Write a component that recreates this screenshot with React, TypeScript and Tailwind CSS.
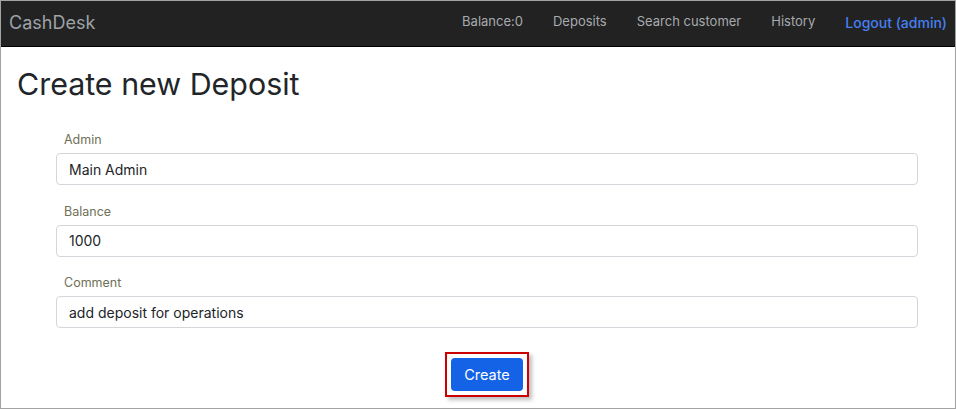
import React from "react";

const links = ["Balance:0", "Deposits", "Search customer", "History"];

function Field({ label, value }: { label: string; value: string }) {
  return (
    <div className="mb-[17.5px]">
      <label className="block pl-[8px] text-[12.5px] leading-[18px] text-[#6f6f58]">{label}</label>
      <div className="mt-[4px] flex h-[32px] items-center rounded-[4px] border border-[#d3d6da] px-[12px] text-[14px] text-[#212529]">
        {value}
      </div>
    </div>
  );
}

export default function App() {
  return (
    <div
      className="h-[409px] w-[956px] overflow-hidden bg-white"
      style={{ fontFamily: "Inter, 'Noto Sans', sans-serif" }}
    >
      <div className="flex h-full flex-col border border-[#a3a3a3]">
        <nav className="flex h-[46px] shrink-0 items-center justify-between border-b border-black bg-[#222222] pb-[3px] pl-[8px] pr-[8px]">
          <span className="text-[18px] text-[#9da3a8]">CashDesk</span>
          <div className="flex items-center gap-[30px] text-[13px] text-[#a7abaf]">
            {links.map((l) => (
              <span key={l}>{l}</span>
            ))}
            <span className="text-[14px] font-medium text-[#4580f2]">Logout (admin)</span>
          </div>
        </nav>
        <main className="flex-1 pl-[16px] pt-[18px]">
          <h1 className="text-[30.4px] leading-[38px] text-[#212529]">Create new Deposit</h1>
          <form className="mt-[28px] ml-[39px] w-[862px]">
            <Field label="Admin" value="Main Admin" />
            <Field label="Balance" value="1000" />
            <Field label="Comment" value="add deposit for operations" />
            <div className="mt-[24px] flex justify-center">
              <div className="border-2 border-[#cc0000] p-[4px] shadow-[3px_3px_4px_rgba(0,0,0,0.25)]">
                <button
                  type="button"
                  className="h-[33px] rounded-[4px] bg-[#1462e6] px-[13px] text-[14.5px] text-white"
                >
                  Create
                </button>
              </div>
            </div>
          </form>
        </main>
      </div>
    </div>
  );
}
